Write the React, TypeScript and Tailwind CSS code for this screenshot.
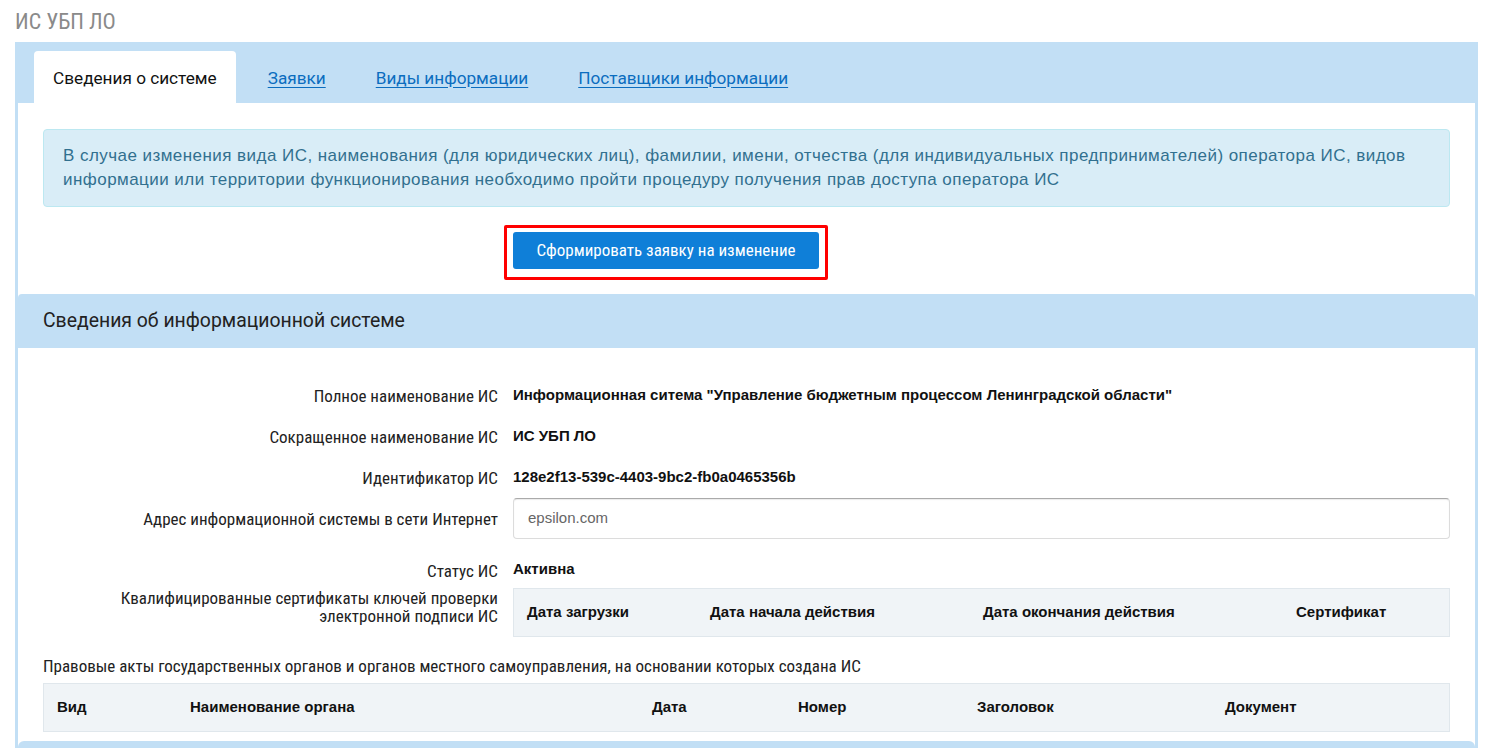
const COND = "font-['Roboto_Condensed','Liberation_Sans_Narrow','DejaVu_Sans_Condensed',sans-serif]";

const CERT_COLS = [
  { title: 'Дата загрузки', w: 'w-[183px]' },
  { title: 'Дата начала действия', w: 'w-[273px]' },
  { title: 'Дата окончания действия', w: 'w-[313px]' },
  { title: 'Сертификат', w: 'flex-1' },
];

const ACT_COLS = [
  { title: 'Вид', w: 'w-[133px]' },
  { title: 'Наименование органа', w: 'w-[462px]' },
  { title: 'Дата', w: 'w-[146px]' },
  { title: 'Номер', w: 'w-[179px]' },
  { title: 'Заголовок', w: 'w-[248px]' },
  { title: 'Документ', w: 'flex-1' },
];

function Label({ children }: { children: React.ReactNode }) {
  return (
    <div className={`w-[470px] shrink-0 pr-[15px] text-right text-[17px] leading-[18px] text-[#222] ${COND}`}>
      {children}
    </div>
  );
}

function InfoRow({ label, value }: { label: string; value: string }) {
  return (
    <div className="flex h-[41px] items-center">
      <Label>{label}</Label>
      <div className="text-[15px] font-bold text-[#111]">{value}</div>
    </div>
  );
}

export default function App() {
  return (
    <div className="h-[748px] overflow-hidden bg-white pl-[15px] pr-[8px] font-['Liberation_Sans',Arial,sans-serif]">
      <div className={`flex h-[42px] items-center text-[22px] text-[#8a8a8a] ${COND}`}>ИС УБП ЛО</div>

      <div className="border-x-[3px] border-[#c2dff5] bg-white">
        {/* tabs */}
        <div className="-mx-[3px] flex h-[61px] items-end bg-[#c2dff5] px-[19px] font-['Roboto',sans-serif] text-[17.2px]">
          <div className="flex h-[52px] items-center rounded-t-[4px] bg-white px-[19px] pt-[3px] text-[#111]">Сведения о системе</div>
          <a className="ml-[32px] flex h-[52px] items-center pt-[3px] text-[#0b6dbf] underline underline-offset-[3px]">Заявки</a>
          <a className="ml-[50px] flex h-[52px] items-center pt-[3px] text-[#0b6dbf] underline underline-offset-[3px]">Виды информации</a>
          <a className="ml-[50px] flex h-[52px] items-center pt-[3px] text-[#0b6dbf] underline underline-offset-[3px]">Поставщики информации</a>
        </div>

        <div className="px-[25px] pt-[26px]">
          <div className="rounded-[4px] border border-[#bce8f1] bg-[#d9edf7] px-[19px] py-[14px] text-[17px] leading-[24px] tracking-[0.45px] text-[#31708f]">
            В случае изменения вида ИС, наименования (для юридических лиц), фамилии, имени, отчества (для индивидуальных предпринимателей) оператора ИС, видов информации или территории функционирования необходимо пройти процедуру получения прав доступа оператора ИС
          </div>
          <div className="flex pt-[18px] pl-[461px]">
            <div className="rounded-[2px] border-[3px] border-[#ff0000] px-[6px] pt-[4px] pb-[8px]">
              <button className={`h-[37px] w-[306px] rounded-[3px] bg-[#0f7fd8] text-[17px] text-white ${COND}`}>
                Сформировать заявку на изменение
              </button>
            </div>
          </div>
        </div>

        <div className="mt-[14px] flex h-[54px] items-center rounded-t-[4px] bg-[#c2dff5] px-[25px] font-['Roboto',sans-serif] text-[19.4px] text-[#222]">
          Сведения об информационной системе
        </div>

        <div className="px-[25px] pt-[27px]">
          <InfoRow label="Полное наименование ИС" value={'Информационная ситема "Управление бюджетным процессом Ленинградской области"'} />
          <InfoRow label="Сокращенное наименование ИС" value="ИС УБП ЛО" />
          <InfoRow label="Идентификатор ИС" value="128e2f13-539c-4403-9bc2-fb0a0465356b" />
          <div className="flex items-center">
            <Label>Адрес информационной системы в сети Интернет</Label>
            <div className="flex h-[41px] flex-1 items-center rounded-[4px] border border-[#dcdcdc] border-t-[#aaa] px-[14px] text-[15px] text-[#666] shadow-[inset_0_1px_1px_rgba(0,0,0,0.08)]">
              epsilon.com
            </div>
          </div>
          <div className="flex h-[43px] items-end pb-[2px]">
            <Label>Статус ИС</Label>
            <div className="text-[15px] font-bold text-[#111]">Активна</div>
          </div>
          <div className="flex pt-[6px]">
            <div className="pt-[1px]">
              <Label>
                Квалифицированные сертификаты ключей проверки
                <br />
                электронной подписи ИС
              </Label>
            </div>
            <div className="flex h-[49px] flex-1 items-center border border-[#e0e7ec] bg-[#f0f4f7] text-[15px] font-bold text-[#111]">
              {CERT_COLS.map((c) => (
                <div key={c.title} className={`${c.w} px-[13px]`}>{c.title}</div>
              ))}
            </div>
          </div>

          <div className={`pt-[20px] pb-[7px] text-[17px] leading-[19px] text-[#222] ${COND}`}>
            Правовые акты государственных органов и органов местного самоуправления, на основании которых создана ИС
          </div>
          <div className="flex h-[49px] items-center border border-[#e0e7ec] bg-[#f0f4f7] text-[15px] font-bold text-[#111]">
            {ACT_COLS.map((c) => (
              <div key={c.title} className={`${c.w} px-[13px]`}>{c.title}</div>
            ))}
          </div>
        </div>

        <div className="mt-[9px] h-[30px] rounded-t-[6px] bg-[#c2dff5]" />
      </div>
    </div>
  );
}
